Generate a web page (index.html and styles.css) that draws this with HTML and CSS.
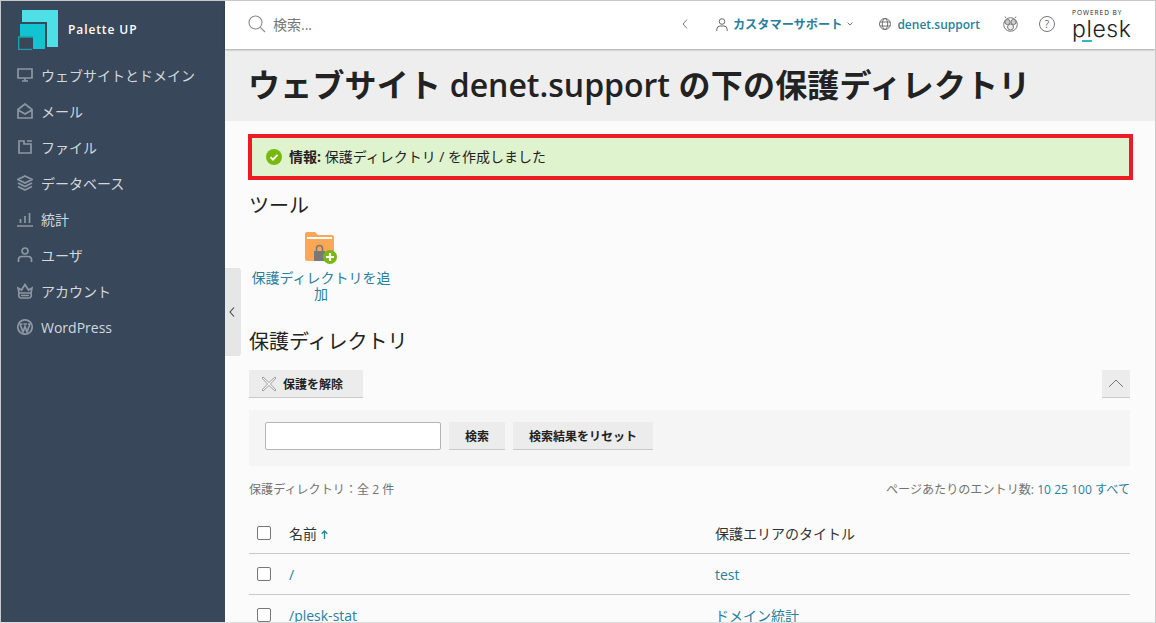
FILE: index.html
```html
<!DOCTYPE html>
<html lang="ja">
<head>
    <meta charset="UTF-8">
    <title>保護ディレクトリ</title>
    <link rel="stylesheet" href="styles.css">
</head>
<body>
    <div class="frame">
        <!-- Sidebar -->
        <aside class="sidebar">
            <div class="brand">
                <svg class="brand-logo" width="40" height="40" viewBox="0 0 40 40">
                    <rect x="4" y="0" width="36" height="37" fill="#4fdfe6"/>
                    <rect x="1" y="12" width="28" height="27" fill="#38485a"/>
                    <rect x="2" y="14" width="25" height="25" fill="#12c3d2"/>
                    <rect x="0" y="27" width="15" height="13" fill="#38485a"/>
                    <path d="M.7 40V27H15" fill="none" stroke="#17a0ad" stroke-width="1.4"/>
                    <path d="M1 39.500H14" fill="none" stroke="#17a0ad" stroke-width="1.4"/>
                </svg>
                <span class="brand-name">Palette UP</span>
            </div>
            <nav class="nav">
                <a class="nav-item">
                    <svg class="nav-icon" viewBox="0 0 16 16"><path d="M1 2h14v9H1zM5 14h6M8 11v3"/></svg>
                    ウェブサイトとドメイン
                </a>
                <a class="nav-item">
                    <svg class="nav-icon" viewBox="0 0 16 16"><path d="M1 6.500 8 1l7 5.500V15H1zM1 7l7 4 7-4"/></svg>
                    メール
                </a>
                <a class="nav-item">
                    <svg class="nav-icon" viewBox="0 0 16 16"><path d="M2 2h5v3h7v9H2zM10 2h4v1"/></svg>
                    ファイル
                </a>
                <a class="nav-item">
                    <svg class="nav-icon" viewBox="0 0 16 16"><path d="M8 1l7 3.500-7 3.500-7-3.500zM1 8l7 3.500L15 8M1 11.500 8 15l7-3.500"/></svg>
                    データベース
                </a>
                <a class="nav-item">
                    <svg class="nav-icon" viewBox="0 0 16 16"><path d="M0 15h16M3.500 12V8M8 12V5M12.500 12V2"/></svg>
                    統計
                </a>
                <a class="nav-item">
                    <svg class="nav-icon" viewBox="0 0 16 16"><circle cx="8" cy="4" r="3"/><path d="M1.500 15v-2.500Q1.500 9.500 5 9.500h6q3.500 0 3.500 3V15"/></svg>
                    ユーザ
                </a>
                <a class="nav-item">
                    <svg class="nav-icon" viewBox="0 0 16 16"><path d="M1 5l3.500 2L8 1.500 11.500 7 15 5l-1 5H2zM2 10q-1 5 2 5h8q3 0 2-5M4 12.500h8"/></svg>
                    アカウント
                </a>
                <a class="nav-item">
                    <svg class="nav-icon" viewBox="0 0 16 16"><circle cx="8" cy="8" r="7.200"/><path d="M3 5l3 8 2-5.500L10 13l3-8M2.500 5h3M6.500 5h3.500M11 5h2.500"/></svg>
                    WordPress
                </a>
            </nav>
        </aside>

        <button class="collapse-tab">
            <svg width="6" height="10" viewBox="0 0 6 10"><path d="M5 .5 1 5l4 4.500" fill="none" stroke="#444" stroke-width="1.100"/></svg>
        </button>

        <div class="main">
            <!-- Top bar -->
            <header class="topbar">
                <div class="search-box">
                    <svg width="18" height="18" viewBox="0 0 18 18"><circle cx="7.500" cy="7.500" r="6.500" fill="none" stroke="#8a8a8a" stroke-width="1.100"/><path d="M12.300 12.300 17 17" stroke="#8a8a8a" stroke-width="1.100"/></svg>
                    <span>検索...</span>
                </div>
                <div class="topbar-right">
                    <svg class="top-back" width="6" height="10" viewBox="0 0 6 10"><path d="M5 .5 1 5l4 4.500" fill="none" stroke="#777" stroke-width="1"/></svg>
                    <a class="top-user">
                        <svg width="12" height="13" viewBox="0 0 12 13"><circle cx="6" cy="3.500" r="2.800" fill="none" stroke="#666"/><path d="M.8 13v-1.500Q.8 8 4 8h4q3.200 0 3.200 3.500V13" fill="none" stroke="#666"/></svg>
                        <b>カスタマーサポート</b>
                        <svg width="6" height="4" viewBox="0 0 6 4"><path d="M.5.5 3 3 5.500.5" fill="none" stroke="#777"/></svg>
                    </a>
                    <a class="top-domain">
                        <svg width="12" height="12" viewBox="0 0 12 12"><g fill="none" stroke="#666" stroke-width=".9"><circle cx="6" cy="6" r="5.500"/><ellipse cx="6" cy="6" rx="2.700" ry="5.500"/><path d="M1 4h10M1 8h10"/></g></svg>
                        denet.support
                    </a>
                    <svg class="top-octopus" width="15" height="16" viewBox="0 0 15 16"><g fill="none" stroke="#777"><circle cx="7.500" cy="8.500" r="6.800"/><circle cx="4.500" cy="6" r="2.600" fill="#ccc"/><circle cx="10.500" cy="6" r="2.600" fill="#ccc"/><circle cx="7.500" cy="11" r="3" fill="#eee"/><path d="M3 2 2 .5M12 2l1-1.500"/></g></svg>
                    <span class="top-help">?</span>
                    <div class="plesk">
                        <span class="plesk-powered">POWERED BY</span>
                        <span class="plesk-name">plesk</span>
                        <i class="plesk-bar"></i>
                    </div>
                </div>
            </header>

            <div class="page-title">
                <h1>ウェブサイト <span>denet.support</span> の下の保護ディレクトリ</h1>
            </div>

            <div class="content">
                <div class="alert">
                    <svg width="16" height="16" viewBox="0 0 16 16"><circle cx="8" cy="8" r="8" fill="#78b90f"/><path d="M4.500 8.200 7 10.700l4.500-4.800" fill="none" stroke="#fff" stroke-width="1.800"/></svg>
                    <p><b>情報:</b> 保護ディレクトリ / を作成しました</p>
                </div>

                <h2>ツール</h2>
                <a class="tool">
                    <svg width="34" height="33" viewBox="0 0 34 33">
                        <path d="M1 3q0-2 2-2h8l3 3h14q2 0 2 2v22q0 2-2 2H3q-2 0-2-2z" fill="#fba755"/>
                        <path d="M3 6h25v2H3z" fill="#fff"/>
                        <rect x="10" y="20" width="11" height="10" fill="#77787a"/>
                        <path d="M12.500 20v-2.500q0-3 3-3t3 3V20" fill="none" stroke="#77787a" stroke-width="1.600"/>
                        <circle cx="26" cy="26" r="7" fill="#78b90f"/>
                        <path d="M26 22v8M22 26h8" stroke="#fff" stroke-width="2.200"/>
                    </svg>
                    <span>保護ディレクトリを追加</span>
                </a>

                <h2 class="list-title">保護ディレクトリ</h2>
                <div class="toolbar">
                    <button class="btn btn-remove">
                        <svg width="16" height="16" viewBox="0 0 16 16"><path d="M2 1 8 6.500 14 1l1 1-5.500 6L15 14l-1 1-6-5.500L2 15l-1-1 5.500-6L1 2z" fill="#f4f4f4" stroke="#999" stroke-width=".9"/></svg>
                        保護を解除
                    </button>
                    <button class="btn btn-fold">
                        <svg width="16" height="9" viewBox="0 0 16 9"><path d="M1 8l7-7 7 7" fill="none" stroke="#777"/></svg>
                    </button>
                </div>

                <form class="search-panel">
                    <input type="text">
                    <button type="button" class="btn btn-search">検索</button>
                    <button type="button" class="btn btn-reset">検索結果をリセット</button>
                </form>

                <div class="list-info">
                    <span>保護ディレクトリ：全 2 件</span>
                    <span>ページあたりのエントリ数: <a>10</a> <a>25</a> <a>100</a> <a>すべて</a></span>
                </div>

                <div class="table">
                    <div class="row row-head">
                        <i class="check"></i>
                        <span class="col-name">名前
                            <svg width="7" height="9" viewBox="0 0 7 9"><path d="M3.500 9V1M.7 3.800 3.500 1l2.800 2.800" fill="none" stroke="#2a7f9e" stroke-width="1.300"/></svg>
                        </span>
                        <span class="col-title">保護エリアのタイトル</span>
                    </div>
                    <div class="row">
                        <i class="check"></i>
                        <a class="col-name">/</a>
                        <a class="col-title">test</a>
                    </div>
                    <div class="row">
                        <i class="check"></i>
                        <a class="col-name">/plesk-stat</a>
                        <a class="col-title">ドメイン統計</a>
                    </div>
                </div>
            </div>
        </div>
    </div>
</body>
</html>
```

FILE: styles.css
```css
* {
    box-sizing: border-box;
}
html, body {
    margin: 0;
    padding: 0;
    height: 100%;
    overflow: hidden;
}
body {
    font-family: "Open Sans", "Noto Sans CJK JP", sans-serif;
    font-size: 14px;
    color: #222;
}
a {
    color: #2a7f9e;
    text-decoration: none;
}
.frame {
    position: relative;
    display: flex;
    height: 623px;
    border: 1px solid #c8c8c8;
    border-bottom-color: #ddd;
    background: #fbfbfb;
    overflow: hidden;
}

/* sidebar */
.sidebar {
    flex: 0 0 224px;
    background: #38485a;
}
.brand {
    display: flex;
    align-items: center;
    height: 56px;
    padding: 0 0 0 17px;
}
.brand-logo {
    margin-top: 2px;
}
.brand-name {
    margin-left: 10px;
    color: #fff;
    font-size: 12px;
    font-weight: 600;
    letter-spacing: .9px;
}
.nav-item {
    display: flex;
    align-items: center;
    height: 36px;
    padding-left: 16px;
    color: #d3d8dd;
    font-size: 14px;
}
.nav-icon {
    width: 16px;
    height: 16px;
    margin-right: 8px;
    fill: none;
    stroke: #8d97a3;
    stroke-width: 1.700;
}
.collapse-tab {
    position: absolute;
    left: 224px;
    top: 267px;
    display: flex;
    align-items: center;
    width: 16px;
    height: 88px;
    padding: 0 0 0 4px;
    border: 0;
    border-radius: 0 3px 3px 0;
    background: #e6e6e6;
}

/* top bar */
.main {
    flex: 1;
    min-width: 0;
}
.topbar {
    position: relative;
    display: flex;
    align-items: center;
    justify-content: space-between;
    height: 48px;
    padding: 0 25px 2px 23px;
    background: #fff;
    box-shadow: 0 1px 2px rgba(0, 0, 0, .3);
}
.search-box {
    display: flex;
    align-items: center;
    gap: 7px;
    color: #777;
    font-size: 14px;
}
.topbar-right {
    display: flex;
    align-items: center;
}
.top-back {
    margin-right: 28px;
}
.top-user {
    display: flex;
    align-items: center;
    gap: 5px;
    margin-right: 26px;
    color: #2a7f9e;
    font-size: 12.200px;
}
.top-domain {
    display: flex;
    align-items: center;
    gap: 6px;
    margin-right: 23px;
    font-size: 12px;
    font-weight: 600;
}
.top-octopus {
    margin-right: 21px;
}
.top-help {
    width: 16px;
    height: 16px;
    margin-right: 17px;
    border: 1px solid #777;
    border-radius: 50%;
    color: #666;
    font-size: 10px;
    line-height: 14px;
    text-align: center;
}
.plesk {
    position: relative;
    display: flex;
    flex-direction: column;
    width: 58px;
    height: 44px;
    padding-top: 7px;
    color: #222;
}
.plesk-powered {
    font-size: 6.500px;
    letter-spacing: 1px;
    line-height: 8px;
    white-space: nowrap;
}
.plesk-name {
    font-family: "Inter", sans-serif;
    font-size: 23px;
    font-weight: 300;
    line-height: 24px;
    letter-spacing: .6px;
}
.plesk-bar {
    position: absolute;
    left: 10px;
    top: 38px;
    width: 10px;
    height: 2px;
    background: #36b4c9;
}

/* title band */
.page-title {
    height: 72px;
    padding: 0 23px;
    background: #eee;
}
h1 {
    margin: 0;
    color: #222;
    font-size: 32px;
    font-weight: 700;
    line-height: 72px;
    letter-spacing: .2px;
    white-space: nowrap;
}
h1 span {
    font-weight: 600;
    letter-spacing: 0;
}

/* content */
.content {
    padding: 13px 25px 0 24px;
}
.alert {
    display: flex;
    align-items: center;
    gap: 7px;
    height: 46px;
    margin: 0 -3px 0 -1px;
    padding-left: 14px;
    border: 4px solid #ed1c24;
    background: #dff3cf;
    font-size: 14px;
}
.alert p {
    margin: 0 0 2px;
}
.alert b {
    font-weight: 700;
}
h2 {
    margin: 12px 0 0;
    color: #222;
    font-size: 20px;
    font-weight: 400;
    line-height: 28px;
}
.tool {
    display: flex;
    flex-direction: column;
    align-items: center;
    width: 144px;
    margin: 11px 0 0;
    font-size: 14px;
    line-height: 16px;
    text-align: center;
}
.tool span {
    margin-top: 6px;
    width: 142px;
}
.list-title {
    margin-top: 26px;
}
.toolbar {
    display: flex;
    justify-content: space-between;
    margin-top: 14px;
}
.btn {
    display: flex;
    align-items: center;
    justify-content: center;
    height: 28px;
    padding: 0;
    border: 0;
    border-bottom: 1px solid #c9c9c9;
    background: #ececec;
    color: #222;
    font-family: inherit;
    font-size: 12px;
    font-weight: 700;
}
.btn-remove {
    justify-content: flex-start;
    gap: 6px;
    width: 114px;
    padding-left: 12px;
}
.btn-fold {
    width: 28px;
}
.search-panel {
    display: flex;
    align-items: flex-start;
    gap: 8px;
    height: 56px;
    margin-top: 12px;
    padding: 12px 0 0 16px;
    background: #f5f5f5;
}
.search-panel input {
    width: 176px;
    height: 28px;
    border: 1px solid #b5b5b5;
    border-radius: 2px;
    background: #fff;
}
.btn-search {
    width: 56px;
}
.btn-reset {
    width: 140px;
}
.list-info {
    display: flex;
    justify-content: space-between;
    margin-top: 15px;
    color: #737373;
    font-size: 12.100px;
    line-height: 18px;
}
.table {
    margin-top: 14px;
}
.row {
    display: flex;
    align-items: center;
    height: 41px;
    border-bottom: 1px solid #c9c9c9;
    font-size: 14px;
}
.row-head {
    color: #333;
}
.check {
    width: 14px;
    height: 14px;
    margin-left: 8px;
    border: 1px solid #777;
    border-radius: 2px;
    background: #fff;
}
.col-name {
    width: 426px;
    margin-left: 18px;
}
```
